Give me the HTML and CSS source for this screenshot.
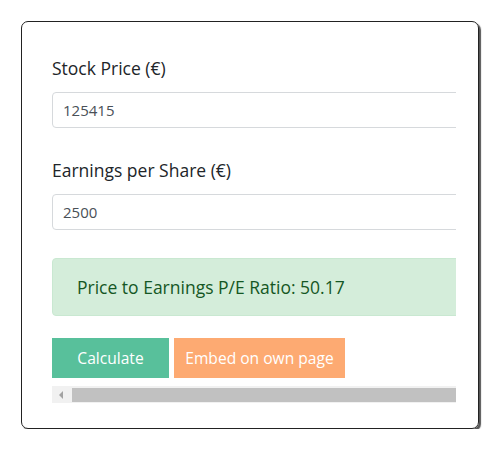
FILE: index.html
```html
<!DOCTYPE html>
<html>
<head>
<meta charset="utf-8">
<link rel="stylesheet" href="styles.css">
</head>
<body>
<div class="card">
  <div class="viewport">
    <div class="content">
      <div class="group">
        <label class="label">Stock Price (€)</label>
        <div class="input">125415</div>
      </div>
      <div class="group second">
        <label class="label">Earnings per Share (€)</label>
        <div class="input">2500</div>
      </div>
      <div class="alert">Price to Earnings P/E Ratio: 50.17</div>
      <div class="buttons">
        <span class="btn btn-green">Calculate</span>
        <span class="btn btn-orange">Embed on own page</span>
      </div>
    </div>
    <div class="scrollbar">
      <div class="sb-arrow"><span class="tri"></span></div>
      <div class="sb-thumb"></div>
    </div>
  </div>
</div>
</body>
</html>
```
FILE: styles.css
```css
html, body {
  margin: 0;
  padding: 0;
  background: #fff;
}
body {
  font-family: "Open Sans", "Noto Sans", sans-serif;
  color: #212529;
  padding: 21px 0 0 21px;
}
.card {
  width: 458px;
  height: 408px;
  box-sizing: border-box;
  border: 1px solid #222;
  border-radius: 7px;
  box-shadow: 2px 2px 1px #555;
  padding: 34px 0 0 30px;
}
.viewport {
  width: 404px;
  overflow: hidden;
}
.content {
  width: 560px;
}
.group {
  display: flex;
  flex-direction: column;
}
.second {
  margin-top: 30px;
}
.label {
  font-size: 17.5px;
  line-height: 24px;
  margin-bottom: 12px;
}
.input {
  height: 36px;
  box-sizing: border-box;
  border: 1px solid #d6d9dc;
  border-radius: 4px;
  padding: 0 10px;
  font-size: 15px;
  line-height: 34px;
  color: #495057;
}
.alert {
  margin-top: 28px;
  height: 58px;
  box-sizing: border-box;
  background: #d4edda;
  border: 1px solid #c9e8d1;
  border-radius: 4px;
  padding: 0 24px;
  font-size: 17.5px;
  line-height: 56px;
  color: #155724;
}
.buttons {
  margin-top: 22px;
  display: flex;
  gap: 5px;
}
.btn {
  height: 40px;
  line-height: 40px;
  color: #fff;
  font-size: 15.6px;
  text-align: center;
}
.btn-green {
  width: 117px;
  background: #58c09b;
}
.btn-orange {
  width: 171px;
  background: #fdaa72;
}
.scrollbar {
  margin-top: 8px;
  height: 17px;
  background: #f1f1f1;
  display: flex;
}
.sb-arrow {
  width: 17px;
  display: flex;
  align-items: center;
  justify-content: center;
}
.tri {
  width: 0;
  height: 0;
  border-top: 4px solid transparent;
  border-bottom: 4px solid transparent;
  border-right: 4px solid #a3a3a3;
}
.sb-thumb {
  flex: 1;
  margin: 2px 0 1px 3px;
  background: #c1c1c1;
}
```
